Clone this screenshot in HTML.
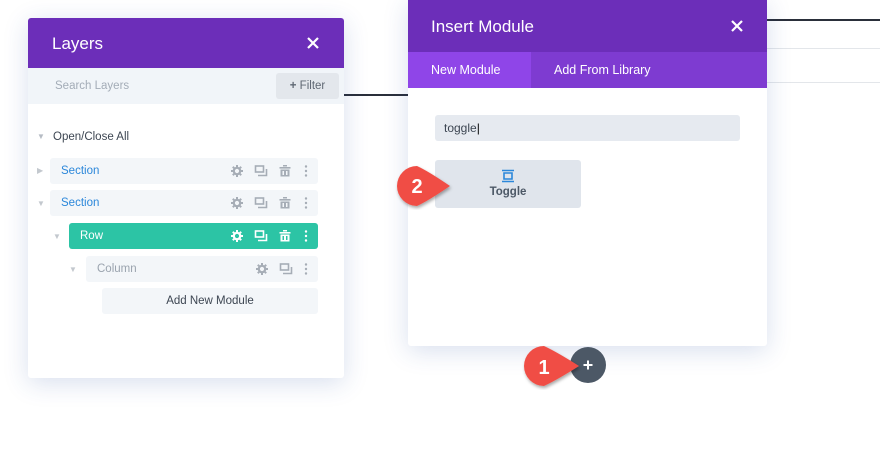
<!DOCTYPE html><html><head><style>
*{margin:0;padding:0;box-sizing:border-box}
body{width:880px;height:456px;background:#fff;position:relative;overflow:hidden;font-family:"Liberation Sans",sans-serif}
.a{position:absolute}
.panel{box-shadow:0 5px 25px rgba(40,80,160,.18)}
.row{position:absolute;height:26px;background:#f3f6f9;border-radius:3px;font-size:11.5px;line-height:26px;padding-left:11px}
.ic{position:absolute;top:6px}
</style></head><body>
<svg width="0" height="0" style="position:absolute"><defs>
<g id="gear"><circle cx="7" cy="7" r="3.2" fill="none" stroke="currentColor" stroke-width="2.2"/><g stroke="currentColor" stroke-width="2"><path d="M7 1v2.5M7 10.5V13M1 7h2.5M10.5 7H13M2.8 2.8l1.8 1.8M9.4 9.4l1.8 1.8M2.8 11.2l1.8-1.8M9.4 4.6l1.8-1.8"/></g></g>
<g id="dup" fill="none" stroke="currentColor" stroke-width="1.6"><rect x="1.5" y="2" width="8" height="6"/><path d="M4 11.5h8.5V5"/></g>
<g id="trash" fill="currentColor"><rect x="1.5" y="3" width="11" height="1.6"/><rect x="5" y="1" width="4" height="1.5"/><path d="M2.5 5.5h9v7h-9zM4.5 7v4h1.5V7zM8 7v4h1.5V7z" fill-rule="evenodd"/></g>
<g id="dots" fill="currentColor"><circle cx="7" cy="2.5" r="1.2"/><circle cx="7" cy="7" r="1.2"/><circle cx="7" cy="11.5" r="1.2"/></g>
</defs></svg>
<div class="a" style="left:767px;top:19px;width:113px;height:2px;background:#2a2f3a"></div>
<div class="a" style="left:767px;top:48px;width:113px;height:1px;background:#e3e6ea"></div>
<div class="a" style="left:767px;top:82px;width:113px;height:1px;background:#e3e6ea"></div>
<div class="a" style="left:344px;top:94px;width:64px;height:2px;background:#2a2f3a"></div>

<div class="a panel" style="left:28px;top:18px;width:316px;height:360px;background:#fff;border-radius:3px">
 <div class="a" style="left:0;top:0;width:316px;height:50px;background:#6c2eb9;border-radius:3px 3px 0 0"></div>
 <div class="a" style="left:24px;top:16px;color:#fff;font-size:17px">Layers</div>
 <svg class="a" style="left:279px;top:19px" width="12" height="12"><path d="M1 1L11 11M11 1L1 11" stroke="#fff" stroke-width="2.2"/></svg>
 <div class="a" style="left:0;top:50px;width:316px;height:36px;background:#f1f5f9"></div>
 <div class="a" style="left:27px;top:62px;color:#a3acb7;font-size:11.5px">Search Layers</div>
 <div class="a" style="left:248px;top:55px;width:63px;height:26px;background:#e3e7ec;border-radius:3px;color:#5f6873;font-size:11.5px;line-height:26px;text-align:center"><b>+</b> Filter</div>
 <div class="a" style="left:9px;top:114px;font-size:8px;color:#b6bcc4">▼</div>
 <div class="a" style="left:25px;top:113px;font-size:11.5px;color:#3d4652">Open/Close All</div>
 <div class="a" style="left:9px;top:148px;font-size:8px;color:#c3c8ce">▶</div>
 <div class="row" style="left:22px;top:140px;width:268px;color:#2b87da">Section<span style="color:#a6adb6"><svg class="ic" style="left:180px" width="14" height="14"><use href="#gear"/></svg><svg class="ic" style="left:204px" width="14" height="14"><use href="#dup"/></svg><svg class="ic" style="left:228px" width="14" height="14"><use href="#trash"/></svg><svg class="ic" style="left:249px" width="14" height="14"><use href="#dots"/></svg></span></div>
 <div class="a" style="left:9px;top:181px;font-size:8px;color:#c3c8ce">▼</div>
 <div class="row" style="left:22px;top:172px;width:268px;color:#2b87da">Section<span style="color:#a6adb6"><svg class="ic" style="left:180px" width="14" height="14"><use href="#gear"/></svg><svg class="ic" style="left:204px" width="14" height="14"><use href="#dup"/></svg><svg class="ic" style="left:228px" width="14" height="14"><use href="#trash"/></svg><svg class="ic" style="left:249px" width="14" height="14"><use href="#dots"/></svg></span></div>
 <div class="a" style="left:25px;top:214px;font-size:8px;color:#c3c8ce">▼</div>
 <div class="row" style="left:41px;top:205px;width:249px;background:#2cc4a5;color:#fff">Row<span style="color:#fff"><svg class="ic" style="left:161px" width="14" height="14"><use href="#gear"/></svg><svg class="ic" style="left:185px" width="14" height="14"><use href="#dup"/></svg><svg class="ic" style="left:209px" width="14" height="14"><use href="#trash"/></svg><svg class="ic" style="left:230px" width="14" height="14"><use href="#dots"/></svg></span></div>
 <div class="a" style="left:41px;top:247px;font-size:8px;color:#c3c8ce">▼</div>
 <div class="row" style="left:58px;top:238px;width:232px;color:#9aa3ae">Column<span style="color:#a6adb6"><svg class="ic" style="left:169px" width="14" height="14"><use href="#gear"/></svg><svg class="ic" style="left:193px" width="14" height="14"><use href="#dup"/></svg><svg class="ic" style="left:213px" width="14" height="14"><use href="#dots"/></svg></span></div>
 <div class="row" style="left:74px;top:270px;width:216px;padding:0;text-align:center;color:#3d4652">Add New Module</div>
</div>

<div class="a panel" style="left:408px;top:0;width:359px;height:346px;background:#fff;border-radius:0 0 3px 3px">
 <div class="a" style="left:0;top:0;width:359px;height:52px;background:#6c2eb9"></div>
 <div class="a" style="left:23px;top:17px;color:#fff;font-size:17px">Insert Module</div>
 <svg class="a" style="left:323px;top:20px" width="12" height="12"><path d="M1 1L11 11M11 1L1 11" stroke="#fff" stroke-width="2.2"/></svg>
 <div class="a" style="left:0;top:52px;width:359px;height:36px;background:#7e3bd1"></div>
 <div class="a" style="left:0;top:52px;width:123px;height:36px;background:#8f45e8"></div>
 <div class="a" style="left:23px;top:63px;color:#fff;font-size:12.5px">New Module</div>
 <div class="a" style="left:146px;top:63px;color:#fff;font-size:12.5px">Add From Library</div>
 <div class="a" style="left:27px;top:115px;width:305px;height:26px;background:#e6eaf0;border-radius:3px;font-size:12px;line-height:26px;padding-left:9px;color:#3d4652">toggle<span style="color:#000">|</span></div>
 <div class="a" style="left:27px;top:160px;width:146px;height:48px;background:#e0e5ec;border-radius:3px;text-align:center;color:#4c5866;font-size:11.5px;font-weight:bold">
  <svg width="14" height="14" viewBox="0 0 14 14" style="margin-top:9px;display:block;margin-left:66px"><g stroke="#2b87da" stroke-width="1.6" fill="none"><path d="M1 1.5h12M1 12.5h12M3 4h8v6H3z"/></g></svg>
  <div style="margin-top:3px">Toggle</div></div>
</div>

<svg class="a" style="left:390px;top:155px" width="70" height="60"><defs><filter id="s"><feDropShadow dx="1" dy="2" stdDeviation="1.5" flood-opacity=".35"/></filter></defs>
<path d="M27 11 A20 20 0 1 0 27 51 Q38 46 60 31 Q38 16 27 11Z" fill="#f04e44" filter="url(#s)"/>
<text x="27" y="38" font-family="Liberation Sans" font-weight="bold" font-size="20" fill="#fff" text-anchor="middle">2</text></svg>

<div class="a" style="left:570px;top:347px;width:36px;height:36px;border-radius:50%;background:#4c5866"></div>
<svg class="a" style="left:582px;top:359px" width="12" height="12"><path d="M6 1.5v9M1.5 6h9" stroke="#fff" stroke-width="2"/></svg>
<svg class="a" style="left:515px;top:338px" width="80" height="60"><defs><filter id="s2"><feDropShadow dx="1" dy="2" stdDeviation="1.5" flood-opacity=".35"/></filter></defs>
<path d="M29 8 A20 20 0 1 0 29 48 Q42 42 64 28 Q42 14 29 8Z" fill="#f04e44" filter="url(#s2)"/>
<text x="29" y="36" font-family="Liberation Sans" font-weight="bold" font-size="20" fill="#fff" text-anchor="middle">1</text></svg>
</body></html>
